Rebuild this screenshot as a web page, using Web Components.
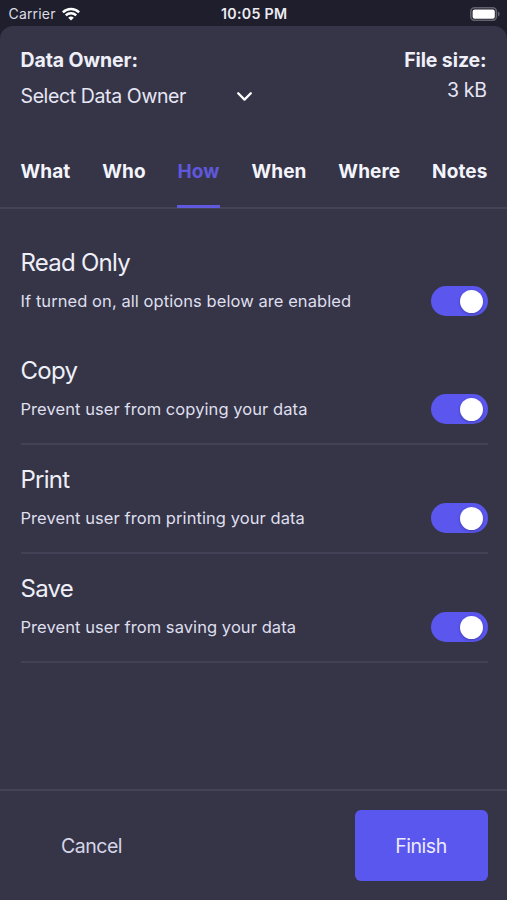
<!DOCTYPE html>
<html lang="en">
<head>
<meta charset="utf-8">
<title>Data options</title>
<style>
html,body{margin:0;height:100%;overflow:hidden;background:#1f1e2d}
body{font-family:Inter,"Liberation Sans",sans-serif;color:#efeff8}
</style>
</head>
<body>
<options-screen></options-screen>
<script>
const define = (name, html) => {
  const t = document.createElement('template');
  t.innerHTML = html;
  customElements.define(name, class extends HTMLElement {
    constructor() {
      super();
      this.attachShadow({ mode: 'open' }).appendChild(t.content.cloneNode(true));
    }
  });
};

define('status-bar', `
<style>
:host{display:grid;grid-template-columns:1fr auto 1fr;align-items:center;height:26px;box-sizing:border-box;padding:1px 7px 0 8.5px;font-size:14px;line-height:18px;color:#dcdce4}
.left{display:flex;align-items:center;gap:6.5px;letter-spacing:.18px}
.time{font-weight:600;font-size:14.2px;letter-spacing:.3px;color:#ececf2}
.right{justify-self:end;display:flex}
svg{display:block}
</style>
<div class="left"><span>Carrier</span>
<svg width="18" height="14" viewBox="0 0 18 14" fill="none" stroke="#fff" stroke-width="2.5"><path d="M.9 5.4a11.5 11.5 0 0 1 16.2 0M3.8 8.4a7.4 7.4 0 0 1 10.4 0"/><path d="M9 13.6 6.2 10.8a4 4 0 0 1 5.6 0z" fill="#fff" stroke="none"/></svg></div>
<span class="time">10:05 PM</span>
<div class="right"><svg width="30" height="14" viewBox="0 0 30 14"><rect x=".8" y=".8" width="25.6" height="12.6" rx="3.8" fill="#1f1e2d" stroke="#62626c" stroke-width="1.6"/><rect x="2.6" y="2.4" width="22.2" height="9.4" rx="2" fill="#fff"/><path d="M28 4.6c2.2.9 2.2 3.9 0 4.8z" fill="#62626c"/></svg></div>`);

define('data-header', `
<style>
:host{display:flex;justify-content:space-between;padding:21px 20.5px 0;height:105px;box-sizing:border-box;font-size:19.5px;line-height:26px}
b{font-weight:700;display:block;letter-spacing:-.1px}
.owner{width:232.5px}
.select{display:flex;justify-content:space-between;align-items:center;margin-top:10px;color:#e6e6f4;letter-spacing:-.38px}
.size{text-align:right}
.size span{display:block;margin-top:4px;color:#e6e6f4;letter-spacing:-.4px}
svg{display:block}
</style>
<div class="owner"><b>Data Owner:</b><div class="select"><span>Select Data Owner</span>
<svg width="17" height="11" viewBox="0 0 17 11" fill="none" stroke="#fff" stroke-width="2.3" stroke-linecap="round" stroke-linejoin="round"><path d="M2.2 2.3 8.5 8.6l6.3-6.3"/></svg></div></div>
<div class="size"><b>File size:</b><span>3 kB</span></div>`);

define('nav-tab', `
<style>
:host{display:block;position:relative;height:77px;line-height:82px;box-sizing:border-box;white-space:nowrap;color:#f4f4fc}
:host([active]){color:#5f58dc}
:host([active])::after{content:"";position:absolute;left:-.3px;right:0;bottom:0;height:3px;background:#6059de}
</style><slot></slot>`);

define('tab-bar', `
<style>
:host{display:flex;justify-content:space-between;padding:0 19.5px 0 20.5px;height:78px;box-sizing:border-box;border-bottom:2px solid #444357;font-size:19px;font-weight:700;letter-spacing:.1px}
</style><slot></slot>`);

define('toggle-switch', `
<style>
:host{display:flex;justify-content:flex-end;align-items:center;width:57px;height:30px;border-radius:15px;box-sizing:border-box;padding-right:5px;background:#5a56ee}
i{width:23px;height:23px;border-radius:50%;background:#fff;box-shadow:0 1px 3px #0004}
</style><i></i>`);

define('option-row', `
<style>
:host{display:block;height:109px;box-sizing:border-box;border-bottom:2px solid #424156}
:host([plain]){border-color:transparent;height:108px}
h2{margin:0;padding-top:19px;font-size:24px;line-height:32px;font-weight:400;letter-spacing:-.75px}
div{display:flex;justify-content:space-between;align-items:center;height:30px;margin-top:7px;font-size:16.5px;letter-spacing:.07px;color:#dfdfed}
</style><h2><slot name="title"></slot></h2><div><slot></slot><toggle-switch></toggle-switch></div>`);

define('action-bar', `
<style>
:host{display:flex;justify-content:space-between;height:111px;box-sizing:border-box;border-top:2px solid #444357;padding:19px 19.5px 0 20px}
button{font:19.5px/70px Inter,"Liberation Sans",sans-serif;letter-spacing:-.45px;height:71px;border:0;padding:0;border-radius:6px;background:none;color:#d6d5e7;width:143px}
.go{width:133px;background:#5a57ef;color:#ecebff}
</style><button>Cancel</button><button class="go">Finish</button>`);

define('options-screen', `
<style>
:host{display:flex;flex-direction:column;width:507px;height:900px}
main{flex:1;display:flex;flex-direction:column;background:#363548;border-radius:13px 13px 0 0}
section{flex:1;padding:19px 19.5px 0 20.5px}
</style>
<status-bar></status-bar>
<main>
<data-header></data-header>
<tab-bar><nav-tab>What</nav-tab><nav-tab>Who</nav-tab><nav-tab active>How</nav-tab><nav-tab>When</nav-tab><nav-tab>Where</nav-tab><nav-tab>Notes</nav-tab></tab-bar>
<section>
<option-row plain><span slot="title">Read Only</span><span>If turned on, all options below are enabled</span></option-row>
<option-row><span slot="title">Copy</span><span>Prevent user from copying your data</span></option-row>
<option-row><span slot="title">Print</span><span>Prevent user from printing your data</span></option-row>
<option-row><span slot="title">Save</span><span>Prevent user from saving your data</span></option-row>
</section>
<action-bar></action-bar>
</main>`);
</script>
</body>
</html>
